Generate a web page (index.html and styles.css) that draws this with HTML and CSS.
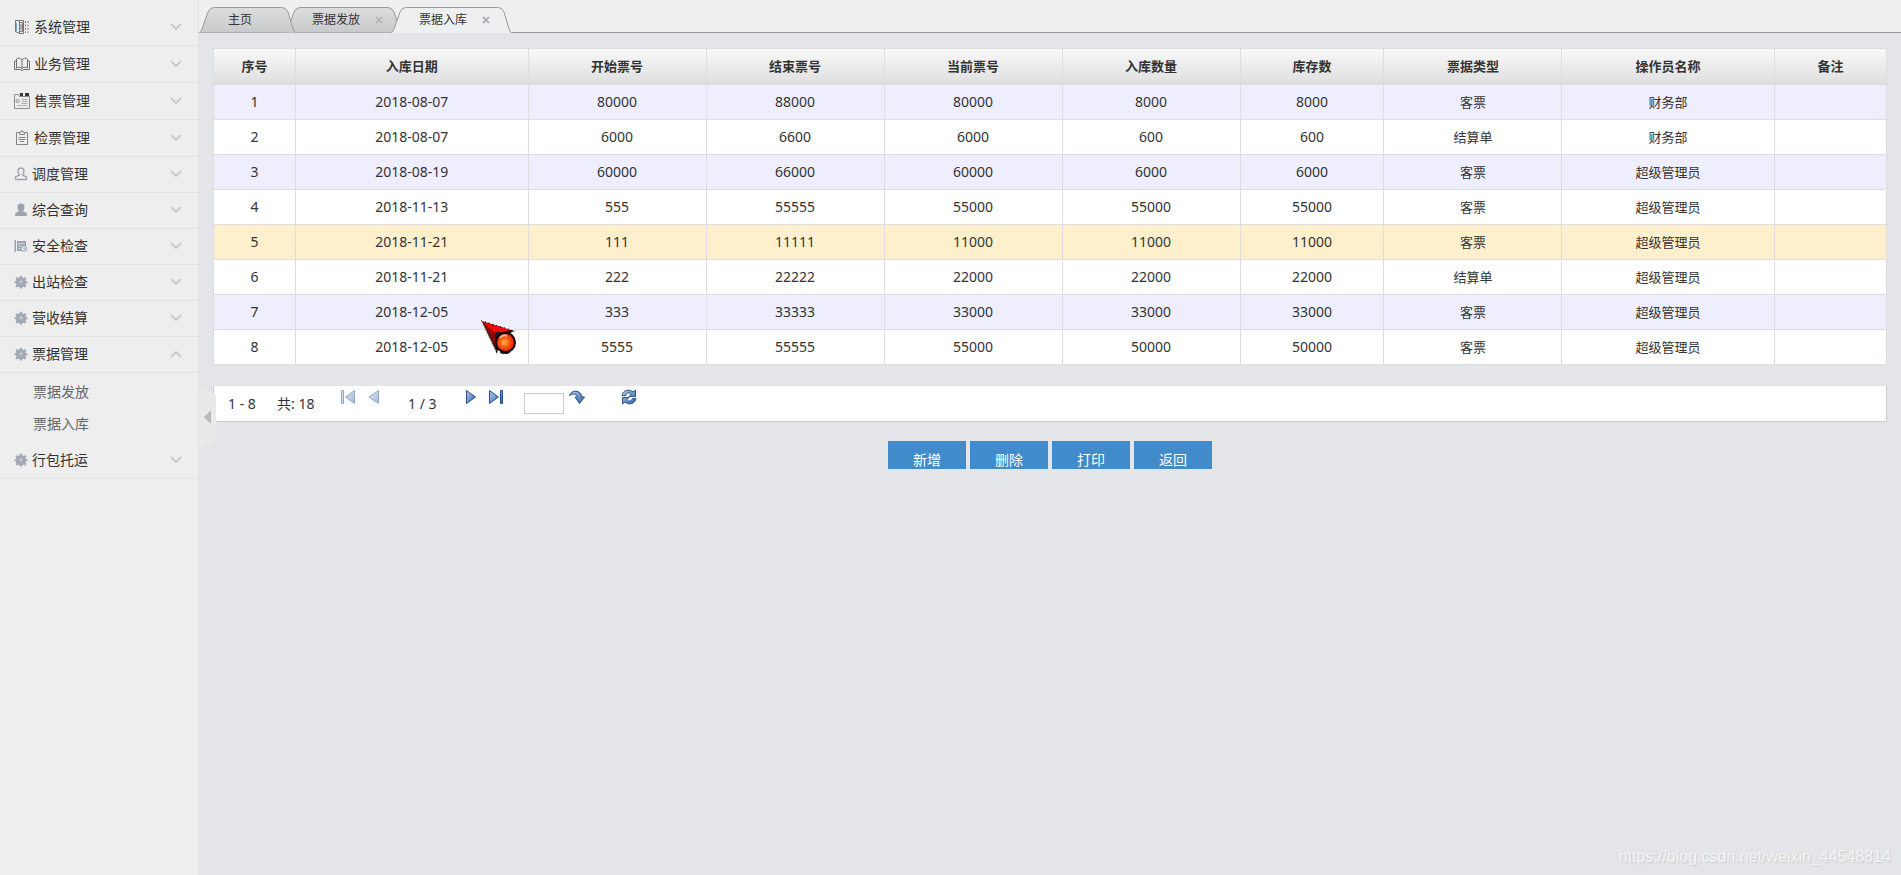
FILE: index.html
```html
<!DOCTYPE html>
<html lang="zh-CN">
<head>
<meta charset="utf-8">
<title>票据入库</title>
<link rel="stylesheet" href="styles.css">
</head>
<body>
<svg class="defs" aria-hidden="true">
  <defs>
    <linearGradient id="tabGray" x1="0" y1="0" x2="0" y2="1"><stop offset="0" stop-color="#dcdddd"/><stop offset="1" stop-color="#c8c9ca"/></linearGradient>
    <linearGradient id="blue" x1="0" y1="0" x2="1" y2="1"><stop offset="0" stop-color="#b4cdea"/><stop offset="1" stop-color="#2a5ea6"/></linearGradient>
    <linearGradient id="pale" x1="0" y1="0" x2="1" y2="1"><stop offset="0" stop-color="#e6eef7"/><stop offset="1" stop-color="#a3b9d6"/></linearGradient>
    <radialGradient id="ball" cx=".45" cy=".5" r=".6"><stop offset="0" stop-color="#ffb050"/><stop offset=".4" stop-color="#ff5a18"/><stop offset="1" stop-color="#d80c00"/></radialGradient>
    <symbol id="down" viewBox="0 0 12 8"><path d="M1 1l5 5 5-5" fill="none" stroke="#b9babc" stroke-width="1.300"/></symbol>
    <symbol id="up" viewBox="0 0 12 8"><path d="M1 7l5-5 5 5" fill="none" stroke="#b9babc" stroke-width="1.300"/></symbol>
    <symbol id="gear" viewBox="0 0 14 14"><path fill="#a2aab5" fill-rule="evenodd" d="M5.900.8h2.200l.4 1.700 1 .4 1.500-.9L12.500 3.500l-.9 1.500.4 1 1.500.4v1.700l-1.500.5-.4 1 .9 1.500-1.500 1.500-1.500-.9-1 .4-.4 1.300H5.900l-.4-1.300-1-.4-1.500.9-1.500-1.500.9-1.500-.4-1L.5 8.100V6.400L2 6l.4-1-.9-1.500L3 2l1.500.9 1-.4zM7 5.500a1.500 1.500 0 100 3 1.500 1.500 0 000-3z"/><path d="M6 6.500l3 3" stroke="#a2aab5" stroke-width="1.200"/></symbol>
  </defs>
</svg>
<div class="app">
  <nav class="sidebar">
    <button class="menu tall"><svg class="icon large" viewBox="0 0 16 16" fill="none" stroke="#767676"><path d="M1.500 1.500h4v13l-4-2zM5.500 3.500h3v9h-3M7 5v6M5.500 1.500h4v13h-4"/><path d="M11.500 2v12M14 2v12" stroke-dasharray="2 1.500"/><path d="M2.500 4v8" stroke="#6fa8cf"/></svg><span>系统管理</span><svg class="chevron"><use href="#down"/></svg></button>
    <button class="menu tall"><svg class="icon large" viewBox="0 0 16 16" fill="none" stroke="#727272"><path d="M8 4C7 2 4 1.500 2.500 3v9C4 11 7 11 8 12.500 9 11 12 11 13.500 12V3C12 1.500 9 2 8 4zM8 4v8.500M2.500 5h-2v8.500h5.500l2 1 2-1h5.500V5h-2"/></svg><span>业务管理</span><svg class="chevron"><use href="#down"/></svg></button>
    <button class="menu tall"><svg class="icon large" viewBox="0 0 16 16" fill="none" stroke="#8c8c8c"><path d="M.5 1.500h4l1 2h10v12H.5z"/><path d="M7.500 6.500h6M7.500 8.500h6M7.500 10.500h6M3 12.500h10.500" stroke="#b0b0b0"/><circle cx="3.500" cy="8" r="1.500"/><path d="M6 1.500h3M11 1.500h4" stroke="#333" stroke-width="3"/></svg><span>售票管理</span><svg class="chevron"><use href="#down"/></svg></button>
    <button class="menu tall"><svg class="icon large" viewBox="0 0 16 16" fill="none" stroke="#828282"><path d="M5 2.500H2.500v12h11v-12H11M5.500 4.500v-2l1.500-.5 1-1.500 1 1.500 1.500.5v2zM4.500 7.500h7M4.500 9.500h7M6 11.500h4"/></svg><span>检票管理</span><svg class="chevron"><use href="#down"/></svg></button>
    <button class="menu"><svg class="icon" viewBox="0 0 14 14" fill="none" stroke="#9ba3ae" stroke-width="1.300"><path d="M7 1C5 1 4 2.500 4 4.500 4 6 5 7 5.500 8L1.500 10v2.500h11V10l-4-2C9 7 10 6 10 4.500 10 2.500 9 1 7 1z"/></svg><span>调度管理</span><svg class="chevron"><use href="#down"/></svg></button>
    <button class="menu"><svg class="icon" viewBox="0 0 14 14" fill="#9ba3ae"><path d="M7 .5C4.500.5 3.300 2 3.500 4.200c0 2 1 3 1.500 4L1.500 10 1 13h12l-.5-3L9 8.200c.5-1 1.500-2 1.500-4C10.700 2 9.500.5 7 .5z"/></svg><span>综合查询</span><svg class="chevron"><use href="#down"/></svg></button>
    <button class="menu"><svg class="icon" viewBox="0 0 14 14"><path fill="#9ba3ae" d="M.5 1H2v12H.5zM3 2h9v10H3z"/><path d="M4 4.500h7M4 7h4M4 9.500h3" stroke="#d5d8dc"/><circle cx="10" cy="9.500" r="2.800" fill="#eee" stroke="#9ba3ae"/><path d="M10 8v2h2" fill="none" stroke="#9ba3ae"/></svg><span>安全检查</span><svg class="chevron"><use href="#down"/></svg></button>
    <button class="menu"><svg class="icon"><use href="#gear"/></svg><span>出站检查</span><svg class="chevron"><use href="#down"/></svg></button>
    <button class="menu"><svg class="icon"><use href="#gear"/></svg><span>营收结算</span><svg class="chevron"><use href="#down"/></svg></button>
    <button class="menu" aria-expanded="true"><svg class="icon"><use href="#gear"/></svg><span>票据管理</span><svg class="chevron"><use href="#up"/></svg></button>
    <div class="submenu"><a href="#">票据发放</a><a href="#">票据入库</a></div>
    <button class="menu"><svg class="icon"><use href="#gear"/></svg><span>行包托运</span><svg class="chevron"><use href="#down"/></svg></button>
  </nav>
  <main class="main">
    <div class="tabs">
      <div class="tab home"><svg class="shape" viewBox="0 0 97 26"><path d="M.5 25.500Q2 25 3 22L9 5Q11 .5 15 .5H83Q87 .5 89 5L94 22Q95 25 97 25.500" fill="url(#tabGray)" stroke="#999"/></svg><a href="#">主页</a></div>
      <div class="tab second"><svg class="shape" viewBox="0 0 118 26"><path d="M.5 25.500Q2 25 3 22L9 5Q11 .5 15 .5H103Q107 .5 109 5L115 22Q116 25 118 25.500" fill="url(#tabGray)" stroke="#999"/></svg><a href="#">票据发放</a><button class="close" aria-label="关闭票据发放"><svg viewBox="0 0 8 8"><path d="M1 1l6 6M7 1L1 7" stroke="#a9afb5" stroke-width="1.300"/></svg></button></div>
      <div class="tab active"><svg class="shape" viewBox="0 0 121 26"><path d="M0 26Q2 25 3 22L9 5Q11 .5 15 .5H107Q111 .5 113 5L118 22Q119 25 121 26" fill="#eeeff0" stroke="#999"/></svg><a href="#">票据入库</a><button class="close" aria-label="关闭票据入库"><svg viewBox="0 0 8 8"><path d="M1 1l6 6M7 1L1 7" stroke="#a9afb5" stroke-width="1.800"/></svg></button></div>
    </div>
    <div class="content">
      <table class="grid">
        <colgroup><col class="c-no"><col class="c-date"><col class="c-mid"><col class="c-mid"><col class="c-mid"><col class="c-mid"><col class="c-stock"><col class="c-mid"><col class="c-user"><col class="c-note"></colgroup>
        <thead><tr><th>序号</th><th>入库日期</th><th>开始票号</th><th>结束票号</th><th>当前票号</th><th>入库数量</th><th>库存数</th><th>票据类型</th><th>操作员名称</th><th>备注</th></tr></thead>
        <tbody>
          <tr><td>1</td><td>2018-08-07</td><td>80000</td><td>88000</td><td>80000</td><td>8000</td><td>8000</td><td>客票</td><td>财务部</td><td></td></tr>
          <tr><td>2</td><td>2018-08-07</td><td>6000</td><td>6600</td><td>6000</td><td>600</td><td>600</td><td>结算单</td><td>财务部</td><td></td></tr>
          <tr><td>3</td><td>2018-08-19</td><td>60000</td><td>66000</td><td>60000</td><td>6000</td><td>6000</td><td>客票</td><td>超级管理员</td><td></td></tr>
          <tr><td>4</td><td>2018-11-13</td><td>555</td><td>55555</td><td>55000</td><td>55000</td><td>55000</td><td>客票</td><td>超级管理员</td><td></td></tr>
          <tr class="selected"><td>5</td><td>2018-11-21</td><td>111</td><td>11111</td><td>11000</td><td>11000</td><td>11000</td><td>客票</td><td>超级管理员</td><td></td></tr>
          <tr><td>6</td><td>2018-11-21</td><td>222</td><td>22222</td><td>22000</td><td>22000</td><td>22000</td><td>结算单</td><td>超级管理员</td><td></td></tr>
          <tr><td>7</td><td>2018-12-05</td><td>333</td><td>33333</td><td>33000</td><td>33000</td><td>33000</td><td>客票</td><td>超级管理员</td><td></td></tr>
          <tr><td>8</td><td>2018-12-05</td><td>5555</td><td>55555</td><td>55000</td><td>50000</td><td>50000</td><td>客票</td><td>超级管理员</td><td></td></tr>
        </tbody>
      </table>
      <div class="pager">
        <span class="range">1 - 8</span><span class="total">共: 18</span>
        <button class="page-btn" aria-label="首页"><svg viewBox="0 0 16 16" fill="url(#pale)" stroke="#8fa8c9"><path d="M1.500 1.500h2v13h-2zM14.500 1.500v13L5.500 8z"/></svg></button>
        <button class="page-btn prev" aria-label="上一页"><svg viewBox="0 0 16 16" fill="url(#pale)" stroke="#8fa8c9"><path d="M12.500 1.500v13L3 8z"/></svg></button>
        <span class="current">1 / 3</span>
        <button class="page-btn" aria-label="下一页"><svg viewBox="0 0 16 16" fill="url(#blue)" stroke="#264f8c"><path d="M3.500 1.500v13L12.500 8z"/></svg></button>
        <button class="page-btn last" aria-label="末页"><svg viewBox="0 0 16 16" fill="url(#blue)" stroke="#264f8c"><path d="M1.500 1.500v13L10.500 8zM12.500 1.500h2v13h-2z"/></svg></button>
        <input class="goto" type="text" aria-label="页码">
        <button class="page-btn" aria-label="跳转"><svg viewBox="0 0 16 16"><path d="M.5 6.500C2 .5 12 .5 13 8h2.500l-5 6.500-4.500-6.500h2.500C8 5 4 4 .5 6.500z" fill="url(#blue)" stroke="#264f8c"/></svg></button>
        <button class="page-btn refresh" aria-label="刷新"><svg viewBox="0 0 16 16" fill="url(#blue)" stroke="#204b8a" stroke-width=".9"><path d="M1 6.500C2 1 8-.500 12 3l2.500-2v6.500H8L10.300 5C8 3 5.500 4 4.500 6.500zM15 9.500C14 15 8 16.500 4 13l-2.500 2V8.500H8L5.700 11c2.300 2 4.800 1 5.800-1.500z"/></svg></button>
      </div>
      <div class="actions"><button>新增</button><button>删除</button><button>打印</button><button>返回</button></div>
    </div>
    <button class="collapse" aria-label="收起菜单"><svg viewBox="0 0 17 62"><path d="M0 0l17 9v44L0 62z" fill="#e9e9e9"/><path d="M5 31l7-7v14z" fill="#b9b9b9"/></svg></button>
  </main>
</div>
<svg class="pointer" viewBox="0 0 38 38" aria-hidden="true"><path d="M1 1l35 11-15 3-4 20z" fill="#260000"/><path d="M3 3l28 8-17 4z" fill="#f00a08"/><path d="M3 4l13 25 1-13z" fill="#8d0808"/><path d="M2 1.500l33 10" stroke="#fff" stroke-width="1.200" stroke-dasharray="3 1"/><path d="M2 3l14 29" stroke="#aaa" stroke-dasharray="2 1"/><path d="M15 13h17l-4 4-9 8-4-3z" fill="#221a1a"/><ellipse cx="25" cy="33" rx="5" ry="2" fill="#222"/><circle cx="25.500" cy="23.500" r="9.500" fill="url(#ball)" stroke="#160808" stroke-width="2"/><path d="M20 19q3-4 7-2" fill="none" stroke="#ffb690" stroke-width="2"/><rect x="22" y="21" width="5" height="5" fill="#ff9c2c"/></svg>
<div class="watermark">https://blog.csdn.net/weixin_44548814</div>
</body>
</html>
```

FILE: styles.css
```css
* { box-sizing: border-box; }
body {
  margin: 0;
  color: #333;
  background: #e4e5e9;
  font: 13px/18px "Noto Sans", "Noto Sans CJK SC", sans-serif;
}
button { margin: 0; padding: 0; border: 0; background: none; color: inherit; font: inherit; cursor: pointer; }
a { color: inherit; text-decoration: none; }
svg { display: block; flex: none; }
.defs { position: absolute; width: 0; height: 0; }
.app { display: flex; min-height: 100vh; }

.sidebar {
  flex: none;
  width: 199px;
  padding-top: 9px;
  background: #eee;
  border-right: 1px solid #e2e3e5;
  font-size: 14px;
}
.menu {
  display: flex;
  align-items: center;
  gap: 4px;
  width: 100%;
  height: 36px;
  padding: 0 16px 1px 14px;
  border-bottom: 1px solid #e2e2e2;
}
.menu.tall { height: 37px; }
.icon { width: 14px; height: 14px; }
.icon.large { width: 16px; height: 16px; }
.chevron { width: 12px; height: 8px; margin-left: auto; }
.submenu { padding: 3px 0; color: #666; }
.submenu a { display: block; padding-left: 33px; line-height: 32px; }

.main { position: relative; flex: 1; min-width: 0; }
.tabs {
  display: flex;
  align-items: flex-end;
  height: 33px;
  background: linear-gradient(#999, #999) bottom / 100% 1px no-repeat #eeeff1;
  font-size: 12px;
}
.tab { position: relative; display: flex; align-items: center; height: 26px; }
.shape { position: absolute; inset: 0; width: 100%; height: 100%; }
.tab a, .close { position: relative; }
.home { z-index: 1; width: 97px; padding-left: 29px; }
.second { width: 118px; margin-left: -11px; padding-left: 27px; }
.active { z-index: 2; width: 121px; margin-left: -12px; padding-left: 28px; }
.close { margin-left: 15px; }
.close svg { width: 8px; height: 8px; }

.content { padding: 15px 14px; }
.grid {
  width: 100%;
  table-layout: fixed;
  border-collapse: collapse;
  background: #fff;
  text-align: center;
}
.grid th, .grid td { height: 35px; padding: 0; border: 1px solid #ddd; }
.grid td { font-size: 14px; }
.grid td:nth-child(n+8) { font-size: 13px; }
.grid thead { background: linear-gradient(#f8f8f8, #dfdfdf); }
.grid thead th { border-bottom-width: 2px; }
.grid tbody tr:first-child td { height: 36px; }
.grid tbody tr:nth-child(odd) { background: #efeefe; }
.grid tbody tr.selected { background: #fff0cd; }
.c-no { width: 4.9%; }
.c-date { width: 13.9%; }
.c-mid { width: 10.64%; }
.c-stock { width: 8.6%; }
.c-user { width: 12.7%; }
.c-note { width: 6.7%; }

.pager {
  display: flex;
  align-items: flex-start;
  height: 36px;
  margin-top: 21px;
  padding: 0 14px;
  background: #fff;
  border: solid #ccc;
  border-width: 0 1px 1px;
  font-size: 14px;
  line-height: 36px;
}
.range, .total, .current { white-space: nowrap; }
.total { margin-left: 19px; }
.range { width: 30px; }
.total { width: 44px; }
.page-btn { margin-top: 3px; }
.total + .page-btn { margin-left: 19px; }
.page-btn svg { width: 16px; height: 16px; }
.prev { margin-left: 10px; }
.current { width: 30px; margin-left: 26px; }
.current + .page-btn { margin-left: 25px; }
.last { margin-left: 9px; }
.goto {
  width: 40px;
  height: 21px;
  margin: 7px 5px 0 20px;
  border: 1px solid #ccc;
  background: #fff;
}
.refresh { margin-left: 36px; }

.actions { display: flex; justify-content: center; gap: 4px; margin-top: 19px; }
.actions button {
  width: 78px;
  height: 28px;
  padding-top: 10px;
  background: #428bca;
  color: #fff;
  font-size: 14px;
  line-height: 18px;
}
.collapse { position: absolute; left: 0; top: 386px; }
.collapse svg { width: 17px; height: 62px; }
.pointer { position: absolute; left: 480px; top: 319px; width: 38px; height: 38px; }
.watermark {
  position: absolute;
  right: 10px;
  bottom: 8px;
  color: #f5f5f6;
  font: 16px/20px "Liberation Sans", sans-serif;
  text-shadow: 1px 1px 1px #c8c9cc;
}
```
